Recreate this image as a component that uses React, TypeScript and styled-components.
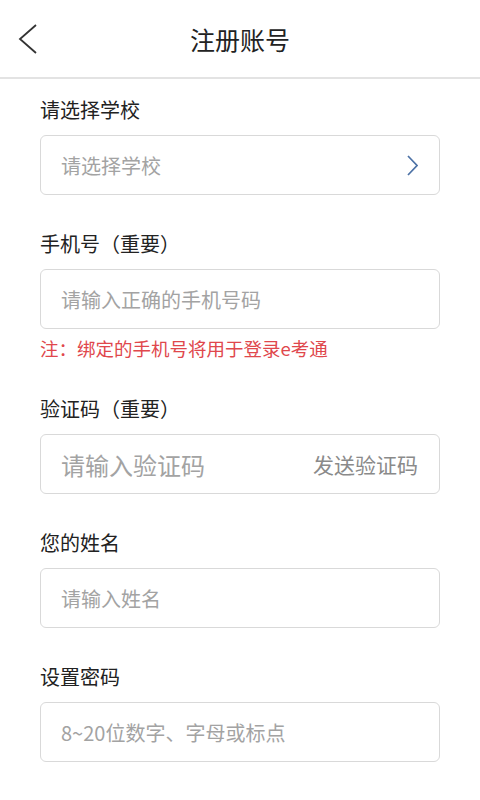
import React from 'react';
import styled, { createGlobalStyle } from 'styled-components';

const GlobalStyle = createGlobalStyle`
  body {
    margin: 0;
    background: #fff;
    font-family: "Noto Sans CJK SC", "Noto Sans", sans-serif;
    color: #222;
  }
  * { box-sizing: border-box; }
`;

const Page = styled.div`
  width: 480px;
  min-height: 800px;
  background: #fff;
`;

const Header = styled.header`
  height: 79px;
  display: flex;
  align-items: center;
  justify-content: center;
  position: relative;
  border-bottom: 2px solid #e3e3e3;
`;

const BackButton = styled.button`
  position: absolute;
  left: 12px;
  top: 18px;
  width: 32px;
  height: 42px;
  padding: 0;
  border: none;
  background: none;
  display: flex;
  align-items: center;
  justify-content: center;
`;

const Title = styled.h1`
  margin: 0;
  font-size: 25px;
  font-weight: 400;
  color: #222;
`;

const Form = styled.form`
  display: flex;
  flex-direction: column;
  gap: 35px;
  padding: 17px 40px 0;
`;

const Field = styled.div`
  display: flex;
  flex-direction: column;
`;

const Label = styled.label`
  font-size: 20px;
  line-height: 28px;
  color: #222;
  margin-bottom: 11px;
`;

const Box = styled.div`
  height: 60px;
  border: 1px solid #d9d9d9;
  border-radius: 6px;
  display: flex;
  align-items: center;
  padding: 0 21px 0 20px;
`;

const Input = styled.input<{ $large?: boolean }>`
  flex: 1;
  min-width: 0;
  border: none;
  outline: none;
  background: transparent;
  padding: 0;
  font-family: inherit;
  font-size: ${p => (p.$large ? '24px' : '20px')};
  color: #333;
  &::placeholder {
    color: #a3a3a3;
  }
`;

const SelectText = styled.span`
  flex: 1;
  font-size: 20px;
  color: #a3a3a3;
`;

const SendCode = styled.button`
  border: none;
  background: none;
  padding: 0;
  font-family: inherit;
  font-size: 21px;
  color: #8a8a8a;
`;

const Note = styled.p`
  margin: 7px 0 0;
  font-size: 18.5px;
  line-height: 24px;
  color: #e0474c;
`;

export default function App() {
  return (
    <Page>
      <GlobalStyle />
      <Header>
        <BackButton type="button" aria-label="返回">
          <svg width="20" height="30" viewBox="0 0 20 30">
            <polyline points="18,1 2,15 18,29" fill="none" stroke="#333" strokeWidth="1.8" />
          </svg>
        </BackButton>
        <Title>注册账号</Title>
      </Header>
      <Form onSubmit={e => e.preventDefault()}>
        <Field>
          <Label>请选择学校</Label>
          <Box>
            <SelectText>请选择学校</SelectText>
            <svg width="11" height="21" viewBox="0 0 11 21">
              <polyline points="1,1 10,10.5 1,20" fill="none" stroke="#4d72a6" strokeWidth="1.7" />
            </svg>
          </Box>
        </Field>
        <Field>
          <Label>手机号（重要）</Label>
          <Box>
            <Input placeholder="请输入正确的手机号码" />
          </Box>
          <Note>注：绑定的手机号将用于登录e考通</Note>
        </Field>
        <Field>
          <Label>验证码（重要）</Label>
          <Box>
            <Input $large placeholder="请输入验证码" />
            <SendCode type="button">发送验证码</SendCode>
          </Box>
        </Field>
        <Field>
          <Label>您的姓名</Label>
          <Box>
            <Input placeholder="请输入姓名" />
          </Box>
        </Field>
        <Field>
          <Label>设置密码</Label>
          <Box>
            <Input type="text" placeholder="8~20位数字、字母或标点" />
          </Box>
        </Field>
      </Form>
    </Page>
  );
}
